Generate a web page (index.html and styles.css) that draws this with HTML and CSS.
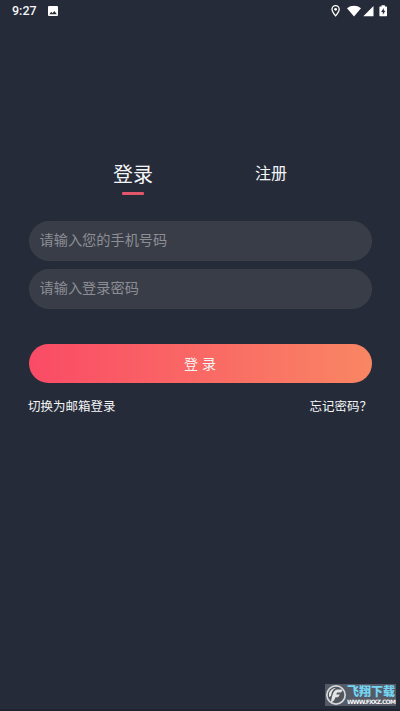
FILE: index.html
```html
<!DOCTYPE html>
<html lang="zh-CN">
<head>
<meta charset="utf-8">
<title>登录</title>
<link rel="stylesheet" href="styles.css">
</head>
<body>
<div class="screen">
  <header class="status">
    <span class="clock">9:27</span>
    <svg class="photo" width="10" height="10" viewBox="0 0 10 10"><path fill="#fff" fill-rule="evenodd" d="M1 0h8a1 1 0 0 1 1 1v8a1 1 0 0 1-1 1H1a1 1 0 0 1-1-1V1a1 1 0 0 1 1-1zM1.3 8.2h7.5L6.4 5 4.6 7.2 3.3 5.8z"/></svg>
    <svg class="indicators" width="58" height="14" viewBox="0 0 58 14">
      <path fill="none" stroke="#fff" stroke-width="1.300" d="M5.600 11.800C3.600 9.400 2 7.300 2 5.200a3.600 3.600 0 0 1 7.200 0c0 2.100-1.600 4.200-3.600 6.600z"/>
      <circle cx="5.600" cy="5.300" r="1.400" fill="#fff"/>
      <path fill="#fff" d="M17 4.200c4-3.300 10-3.300 14 0L24 12.600zM43.500 2v10.300H33.300zM50 2.500h1.500V1.200h3.400v1.300h1.500c.4 0 .6.200.6.600v8.500c0 .4-.2.600-.6.600H50c-.4 0-.6-.2-.6-.6V3.100c0-.4.200-.6.600-.6z"/>
      <path fill="#252b39" d="M53.800 4l-2.700 4h1.700v2.800l2.600-4h-1.600z"/>
    </svg>
  </header>
  <main class="content">
    <nav class="tabs">
      <a class="tab active">登录</a>
      <a class="tab">注册</a>
    </nav>
    <div class="field">请输入您的手机号码</div>
    <div class="field">请输入登录密码</div>
    <div class="submit">登 录</div>
    <div class="links"><span>切换为邮箱登录</span><span>忘记密码？</span></div>
  </main>
  <div class="watermark">
    <svg width="22" height="22" viewBox="0 0 22 22"><circle cx="11" cy="11" r="10" fill="#d5d7da"/><circle cx="11" cy="11" r="8.300" fill="#51565f"/><path fill="#e4e5e7" d="M6 18c1-6 2-11.500 6-12.500h6l-2 3h-4l-.7 2H15l-2 2.700h-2.500C9.500 16 8 18 6 18zM4 9c1-3 4-5 7-5-3 1.500-4.500 4-5 8l-2 1z"/></svg>
    <div class="brand"><span class="name">飞翔下载</span><span class="site">WWW.FXXZ.COM</span></div>
  </div>
</div>
</body>
</html>
```
FILE: styles.css
```css
body {
  margin: 0;
  background: #252b39;
  font-family: "Noto Sans CJK SC", sans-serif;
  color: #f4f5f6;
}
.screen {
  position: relative;
  box-sizing: border-box;
  height: 711px;
  overflow: hidden;
  border-bottom: 2px solid #202430;
}
.status {
  display: flex;
  align-items: center;
  height: 22px;
  padding: 0 12px;
}
.clock {
  width: 36px;
  font: 500 12.500px/22px Roboto, sans-serif;
}
.indicators {
  margin-left: auto;
}
.content {
  padding: 137px 28px 0;
}
.tabs {
  display: flex;
  height: 62px;
  padding-left: 36px;
}
.tab {
  width: 138px;
  text-align: center;
  font-size: 16px;
  line-height: 26px;
}
.tab.active {
  font-size: 20px;
  line-height: 29px;
}
.tab.active::after {
  content: "";
  display: block;
  width: 22px;
  height: 3px;
  margin: 4px auto 0;
  border-radius: 1px;
  background: #e2566b;
}
.field {
  box-sizing: border-box;
  width: 343px;
  height: 40px;
  margin: 0 auto 8px;
  padding-left: 10px;
  border: 1px solid #3d3f47;
  border-radius: 20px;
  background: #393d48;
  color: #8c8e94;
  font-size: 14.200px;
  line-height: 35px;
}
.submit {
  width: 343px;
  height: 39px;
  margin: 35px auto 0;
  border-radius: 20px;
  background: linear-gradient(90deg, #fa4b66, #f98663);
  text-align: center;
  font-size: 14px;
  line-height: 38px;
  word-spacing: 1px;
}
.links {
  display: flex;
  justify-content: space-between;
  margin-top: 13px;
  font-size: 12.500px;
  line-height: 20px;
}
.watermark {
  position: absolute;
  left: 325px;
  top: 684px;
  display: flex;
  width: 71px;
  height: 22px;
  background: #555b66;
}
.brand {
  display: flex;
  flex-direction: column;
  width: 49px;
}
.name {
  height: 14px;
  color: #75d4f2;
  font-size: 12px;
  font-weight: 900;
  line-height: 14px;
  white-space: nowrap;
}
.site {
  height: 8px;
  font: bold 6px/8px "DejaVu Sans", sans-serif;
  letter-spacing: -0.75px;
  white-space: nowrap;
}
```
